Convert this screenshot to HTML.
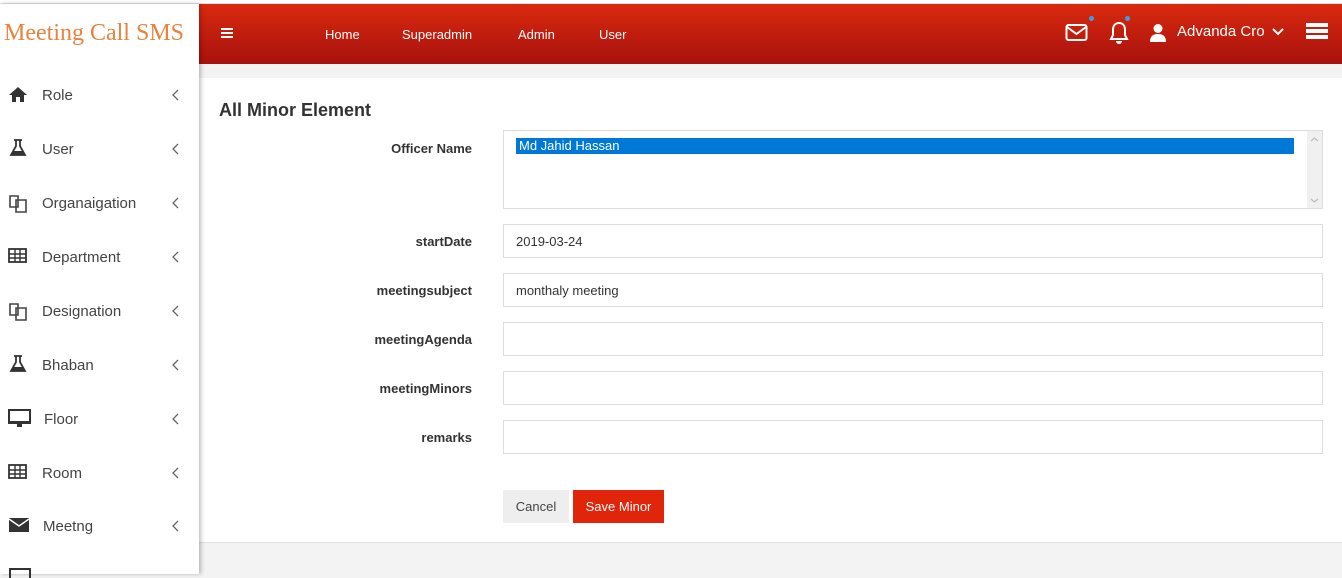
<!DOCTYPE html>
<html><head><meta charset="utf-8"><style>
*{box-sizing:border-box;margin:0;padding:0}
body{width:1342px;height:574px;overflow:hidden;background:#f3f3f3;font-family:"Liberation Sans",sans-serif;position:relative}
.top{position:absolute;left:0;top:0;width:1342px;height:4px;background:#fff;border-bottom:1px solid #e3e3e3}
.side{position:absolute;left:0;top:4px;width:199px;height:570px;background:#fff;box-shadow:2px 0 4px rgba(0,0,0,.25);z-index:2}
.logo{position:absolute;left:4px;top:16px;font-family:"Liberation Serif",serif;font-size:24px;color:#e8823c}
.item{position:absolute;left:0;width:199px;height:30px;font-size:15px;color:#444}
.item svg{position:absolute;left:8px;top:5px}
.item span{position:absolute;left:42px;top:7px}
.item svg.ch{left:172px;top:9px}
.hdr{position:absolute;left:199px;top:4px;width:1143px;height:60px;background:linear-gradient(#d92a0e,#a8110e);color:#fff;font-size:13px}
.hdr .n{position:absolute;top:23px}
.card{position:absolute;left:199px;top:78px;width:1143px;height:465px;background:#fff;border-bottom:1px solid #e0e0e0}
h1{position:absolute;left:20px;top:22px;font-size:18px;color:#333}
.lbl{position:absolute;right:870px;font-size:13px;font-weight:bold;color:#333}
.inp{position:absolute;left:304px;width:820px;height:34px;border:1px solid #ddd;font-size:13px;color:#333;padding:9px 12px}
.btn{position:absolute;top:412px;height:33px;font-size:13px;padding:9px 0;text-align:center;white-space:nowrap}
</style></head><body>
<div class="top"></div>
<div class="side">
<div class="logo">Meeting Call SMS</div>
<div class="item" style="top:76px"><svg width="20" height="18" viewBox="0 0 20 18"><path d="M10 2 1 10h3v7h4v-5h4v5h4v-7h3z" fill="#333"/></svg><span>Role</span><svg class="ch" width="8" height="12" viewBox="0 0 8 12"><path d="M6 1 1 6l5 5" fill="none" stroke="#666" stroke-width="1.3"/></svg></div>
<div class="item" style="top:130px"><svg width="20" height="18" viewBox="0 0 20 18"><path d="M6 1h8M8 1v6L3 16h14L12 7V1" fill="none" stroke="#333" stroke-width="1.8"/><path d="M5 12h10l2 4H3z" fill="#333"/></svg><span>User</span><svg class="ch" width="8" height="12" viewBox="0 0 8 12"><path d="M6 1 1 6l5 5" fill="none" stroke="#666" stroke-width="1.3"/></svg></div>
<div class="item" style="top:184px"><svg width="22" height="22" viewBox="0 0 22 22"><path d="M2 3h8v11H2zM8 7h10v12H8z" fill="#fff" stroke="#444" stroke-width="1.6"/></svg><span>Organaigation</span><svg class="ch" width="8" height="12" viewBox="0 0 8 12"><path d="M6 1 1 6l5 5" fill="none" stroke="#666" stroke-width="1.3"/></svg></div>
<div class="item" style="top:238px"><svg width="20" height="18" viewBox="0 0 20 18"><rect x="1" y="2" width="17" height="13" fill="none" stroke="#333" stroke-width="1.8"/><path d="M1 7h17M1 11h17M7 2v13M12 2v13" stroke="#333" stroke-width="1.4"/></svg><span>Department</span><svg class="ch" width="8" height="12" viewBox="0 0 8 12"><path d="M6 1 1 6l5 5" fill="none" stroke="#666" stroke-width="1.3"/></svg></div>
<div class="item" style="top:292px"><svg width="22" height="22" viewBox="0 0 22 22"><path d="M2 3h8v11H2zM8 7h10v12H8z" fill="#fff" stroke="#444" stroke-width="1.6"/></svg><span>Designation</span><svg class="ch" width="8" height="12" viewBox="0 0 8 12"><path d="M6 1 1 6l5 5" fill="none" stroke="#666" stroke-width="1.3"/></svg></div>
<div class="item" style="top:346px"><svg width="20" height="18" viewBox="0 0 20 18"><path d="M6 1h8M8 1v6L3 16h14L12 7V1" fill="none" stroke="#333" stroke-width="1.8"/><path d="M5 12h10l2 4H3z" fill="#333"/></svg><span>Bhaban</span><svg class="ch" width="8" height="12" viewBox="0 0 8 12"><path d="M6 1 1 6l5 5" fill="none" stroke="#666" stroke-width="1.3"/></svg></div>
<div class="item" style="top:400px"><svg width="24" height="20" viewBox="0 0 24 20"><rect x="1" y="1" width="21" height="13" fill="none" stroke="#333" stroke-width="2"/><path d="M1 12h21v3H1zM9 15h5v3H9z" fill="#333"/></svg><span style="left:44px">Floor</span><svg class="ch" width="8" height="12" viewBox="0 0 8 12"><path d="M6 1 1 6l5 5" fill="none" stroke="#666" stroke-width="1.3"/></svg></div>
<div class="item" style="top:454px"><svg width="20" height="18" viewBox="0 0 20 18"><rect x="1" y="2" width="17" height="13" fill="none" stroke="#333" stroke-width="1.8"/><path d="M1 7h17M1 11h17M7 2v13M12 2v13" stroke="#333" stroke-width="1.4"/></svg><span>Room</span><svg class="ch" width="8" height="12" viewBox="0 0 8 12"><path d="M6 1 1 6l5 5" fill="none" stroke="#666" stroke-width="1.3"/></svg></div>
<div class="item" style="top:507px"><svg width="22" height="18" viewBox="0 0 22 18"><path d="M1 2h20v14H1z" fill="#333"/><path d="M1 3l10 7 10-7" fill="none" stroke="#fff" stroke-width="1.5"/></svg><span style="left:43px">Meetng</span><svg class="ch" width="8" height="12" viewBox="0 0 8 12"><path d="M6 1 1 6l5 5" fill="none" stroke="#666" stroke-width="1.3"/></svg></div>
<div style="position:absolute;left:9px;top:564px;width:22px;height:10px;border:2px solid #333;border-bottom:none"></div>
</div>
<div class="hdr">
<div style="position:absolute;left:22px;top:24px;width:12px;height:2px;background:#fff;box-shadow:0 4px #fff,0 8px #fff"></div>
<span class="n" style="left:126px">Home</span><span class="n" style="left:203px">Superadmin</span><span class="n" style="left:319px">Admin</span><span class="n" style="left:400px">User</span>
<svg style="position:absolute;left:866px;top:19px" width="24" height="20" viewBox="0 0 24 20"><rect x="1.5" y="2" width="20" height="15" rx="2" fill="none" stroke="#fff" stroke-width="2"/><path d="M2 4l9.5 7L21 4" fill="none" stroke="#fff" stroke-width="2"/></svg>
<div style="position:absolute;left:890px;top:12px;width:5px;height:5px;border-radius:50%;background:#3aa0e6"></div>
<svg style="position:absolute;left:909px;top:17px" width="22" height="24" viewBox="0 0 22 24"><path d="M11 2c-4 0-6 3-6 7v5l-2 4h16l-2-4V9c0-4-2-7-6-7z" fill="none" stroke="#fff" stroke-width="2"/><path d="M8 20a3 3 0 0 0 6 0z" fill="#fff"/></svg>
<div style="position:absolute;left:926px;top:12px;width:5px;height:5px;border-radius:50%;background:#3aa0e6"></div>
<svg style="position:absolute;left:950px;top:19px" width="18" height="20" viewBox="0 0 18 20"><circle cx="9" cy="5.5" r="4.5" fill="#fff"/><path d="M1 19c0-6 3-8 8-8s8 2 8 8z" fill="#fff"/></svg>
<span style="position:absolute;left:978px;top:19px;font-size:15px">Advanda Cro</span>
<svg style="position:absolute;left:1073px;top:24px" width="12" height="8" viewBox="0 0 12 8"><path d="M1 1l5 5 5-5" fill="none" stroke="#fff" stroke-width="2"/></svg>
<div style="position:absolute;left:1107px;top:19px;width:22px;height:4px;background:#fff;box-shadow:0 6px #fff,0 12px #fff"></div>
</div>
<div class="card">
<h1>All Minor Element</h1>
<div class="lbl" style="top:63px">Officer Name</div>
<div class="inp" style="top:52px;height:79px;padding:7px 12px"><div style="background:#0078d7;color:#fff;width:778px;height:16px;padding:0 3px;line-height:16px">Md Jahid Hassan</div>
<svg style="position:absolute;right:0;top:0" width="15" height="77" viewBox="0 0 15 77"><rect width="15" height="77" fill="#f0f0f0"/><path d="M4 10l3.5-3 3.5 3M4 68l3.5 3 3.5-3" fill="none" stroke="#bbb" stroke-width="1.2"/></svg></div>
<div class="lbl" style="top:156px">startDate</div><div class="inp" style="top:146px">2019-03-24</div>
<div class="lbl" style="top:205px">meetingsubject</div><div class="inp" style="top:195px">monthaly meeting</div>
<div class="lbl" style="top:254px">meetingAgenda</div><div class="inp" style="top:244px"></div>
<div class="lbl" style="top:303px">meetingMinors</div><div class="inp" style="top:293px"></div>
<div class="lbl" style="top:352px">remarks</div><div class="inp" style="top:342px"></div>
<div class="btn" style="left:304px;width:66px;background:#eee;color:#444">Cancel</div>
<div class="btn" style="left:374px;width:91px;background:#e0250a;color:#fff">Save Minor</div>
</div>
</body></html>
